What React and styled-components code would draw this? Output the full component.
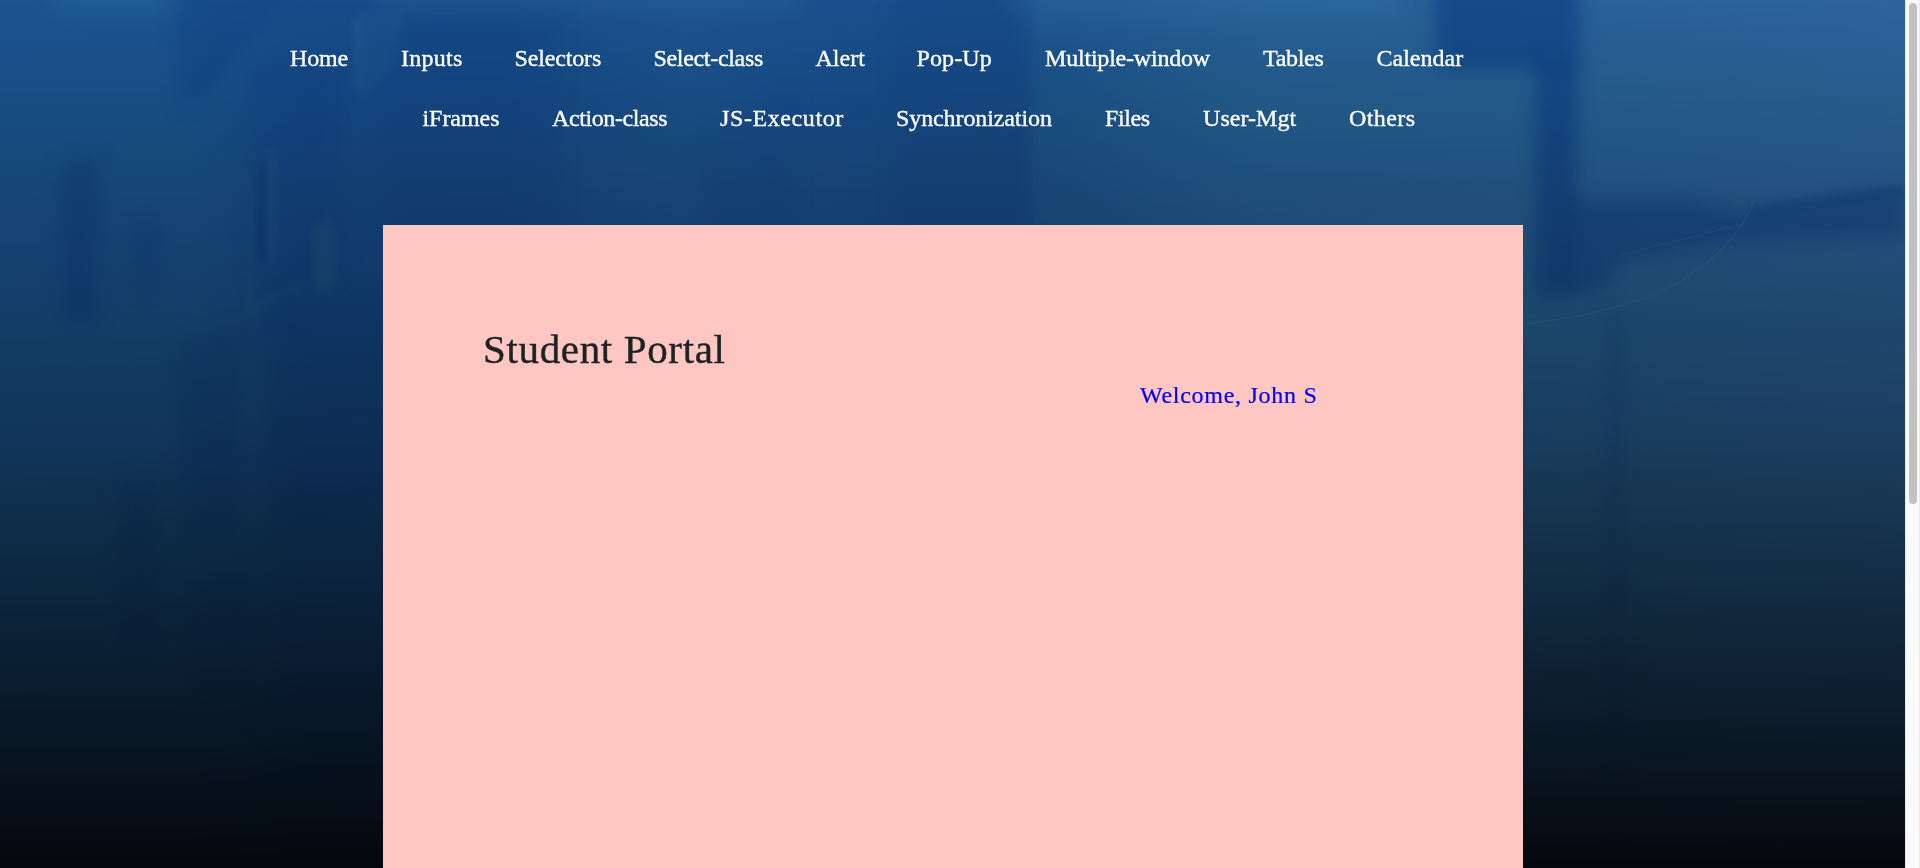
import React from "react";
import styled, { createGlobalStyle } from "styled-components";

const GlobalStyle = createGlobalStyle`
  * { box-sizing: border-box; }
  html, body { margin: 0; padding: 0; overflow: hidden; }
  body { font-family: "Liberation Serif", "Times New Roman", serif; background: #03070d; }
`;

const Screen = styled.div`
  display: flex;
  width: 100%;
  height: 868px;
  overflow: hidden;
`;

const Page = styled.div`
  position: relative;
  flex: 1;
  height: 868px;
  overflow: hidden;
`;

const Backdrop = styled.svg`
  position: absolute;
  inset: 0;
  width: 100%;
  height: 100%;
`;

const Content = styled.div`
  position: relative;
  display: flex;
  flex-direction: column;
  height: 100%;
`;

const Nav = styled.nav`
  display: flex;
  flex-direction: column;
  height: 225px;
  padding-top: 28px;
`;

const NavRow = styled.ul`
  display: flex;
  gap: 53px;
  height: 60px;
  margin: 0;
  padding: 0 0 0 ${(p) => p.$indent}px;
  list-style: none;
`;

const NavItem = styled.li`
  width: ${(p) => p.$width}px;
  flex: none;
`;

const NavLink = styled.a`
  color: #fff;
  font-size: 24px;
  line-height: 60px;
  letter-spacing: ${(p) => p.$tracking}px;
  white-space: nowrap;
  text-decoration: none;
  -webkit-text-stroke: 0.35px #fff;
`;

const Panel = styled.main`
  display: flex;
  flex-direction: column;
  width: 1140px;
  flex: 1;
  margin-left: 383px;
  padding: 100px 206px 0 100px;
  background: #ffc7c2;
`;

const Title = styled.h1`
  margin: 0;
  color: #1c2325;
  font-size: 41px;
  font-weight: 400;
  line-height: 48px;
  letter-spacing: 0.65px;
  -webkit-text-stroke: 0.4px #1c2325;
`;

const Welcome = styled.p`
  margin: 7px 0 0;
  align-self: flex-end;
  width: 177px;
  color: #00f;
  font-size: 24px;
  line-height: 30px;
  letter-spacing: 0.72px;
  white-space: nowrap;
  -webkit-text-stroke: 0.2px #00f;
`;

const ScrollTrack = styled.div`
  width: 15px;
  height: 100%;
  padding: 3px 2px 0 3px;
  border-left: 1px solid #e8e8e8;
  border-right: 1px solid #ececec;
  background: #fafafa;
`;

const ScrollThumb = styled.div`
  width: 8px;
  height: 501px;
  border-radius: 4px;
  background: #c1c1c1;
`;

const rows = [
  {
    indent: 290,
    items: [
      ["Home", 58, -0.2],
      ["Inputs", 60.5, 0.25],
      ["Selectors", 86, -0.15],
      ["Select-class", 109, -0.32],
      ["Alert", 48, 0],
      ["Pop-Up", 75.5, 0.1],
      ["Multiple-window", 165, -0.2],
      ["Tables", 60.5, -0.3],
      ["Calendar", 86, 0],
    ],
  },
  {
    indent: 422.5,
    items: [
      ["iFrames", 76.5, -0.05],
      ["Action-class", 115, -0.4],
      ["JS-Executor", 123, 0.6],
      ["Synchronization", 156, -0.1],
      ["Files", 45, -0.4],
      ["User-Mgt", 93, 0.05],
      ["Others", 66, 0.4],
    ],
  },
];

function NightStreet() {
  return (
    <Backdrop viewBox="0 0 1905 868" preserveAspectRatio="none" aria-hidden="true">
      <defs>
        <linearGradient id="base" x1="0" x2="1" y1="0" y2="0">
          <stop offset="0" stopColor="#1b5794" />
          <stop offset="0.1" stopColor="#1b5793" />
          <stop offset="0.16" stopColor="#174e8e" />
          <stop offset="0.26" stopColor="#174d8d" />
          <stop offset="0.36" stopColor="#1c5592" />
          <stop offset="0.45" stopColor="#195190" />
          <stop offset="0.539" stopColor="#19508d" />
          <stop offset="0.544" stopColor="#1d5791" />
          <stop offset="0.66" stopColor="#266298" />
          <stop offset="0.8" stopColor="#28649a" />
          <stop offset="1" stopColor="#2d669f" />
        </linearGradient>
        <linearGradient id="shade" x1="0" x2="0" y1="0" y2="1">
          <stop offset="0" stopColor="#050b0e" stopOpacity="0.02" />
          <stop offset="0.25" stopColor="#050b0e" stopOpacity="0.24" />
          <stop offset="0.5" stopColor="#050b0e" stopOpacity="0.43" />
          <stop offset="0.69" stopColor="#050b0e" stopOpacity="0.65" />
          <stop offset="0.86" stopColor="#050a0f" stopOpacity="0.85" />
          <stop offset="1" stopColor="#04060b" stopOpacity="0.98" />
        </linearGradient>
        <linearGradient id="glow" x1="0" x2="0" y1="0" y2="1">
          <stop offset="0" stopColor="#3a80ad" stopOpacity="0.26" />
          <stop offset="1" stopColor="#3a80ad" stopOpacity="0" />
        </linearGradient>
        <filter id="soft" x="-30%" y="-30%" width="160%" height="160%" colorInterpolationFilters="sRGB">
          <feGaussianBlur stdDeviation="9" />
        </filter>
        <filter id="edge" x="-30%" y="-30%" width="160%" height="160%" colorInterpolationFilters="sRGB">
          <feGaussianBlur stdDeviation="3.5" />
        </filter>
      </defs>
      <rect width="1905" height="868" fill="url(#base)" />
      <g fill="#0d4189" filter="url(#soft)">
        <path d="M172 -20H300L210 95L180 108Z" opacity="0.38" />
        <path d="M250 60H345V300L280 330L250 280Z" opacity="0.22" />
        <path d="M402 15L560 0V240H383V90Z" opacity="0.2" />
        <path d="M700 150L795 90V240H700ZM895 -20H1020V240H895Z" opacity="0.2" />
        <path d="M62 165L98 155V320L62 325Z" opacity="0.5" />
        <path d="M133 225H157V290H133Z" opacity="0.35" />
        <path d="M178 345L240 325V540L178 545ZM265 315L390 290V490L330 520H270Z" opacity="0.38" />
        <path d="M118 480L160 470V655H118ZM185 575L250 565V690H185Z" opacity="0.38" />
        <path d="M270 520H390V780H270Z" opacity="0.2" />
        <path d="M1435 -30H1580V70H1435Z" opacity="0.65" />
        <path d="M1535 60H1577V295H1535Z" opacity="0.65" />
        <path d="M1570 198H1690L1750 212L1905 190V236L1740 243L1620 262L1600 292H1570Z" opacity="0.5" />
        <path d="M1608 310H1622V868H1608Z" opacity="0.28" />
      </g>
      <g filter="url(#edge)">
        <path d="M255 170L267 160V260H255Z" fill="#0b3d84" opacity="0.45" />
        <path d="M250 170V314L275 296L310 285L345 300" fill="none" stroke="#2d718b" strokeWidth="7" opacity="0.16" />
        <path d="M272 150V260M358 20V90" fill="none" stroke="#3978a0" strokeWidth="8" opacity="0.2" />
        <rect x="314" y="221" width="21" height="67" rx="9" fill="#2d7190" opacity="0.28" />
        <path d="M360 102L392 70L405 12H355Z" fill="#296b9c" opacity="0.18" />
        <path d="M1750 206L1905 184V197L1750 219Z" fill="#0e438c" opacity="0.4" />
      </g>
      <path
        d="M1523 324Q1600 316 1660 292Q1718 263 1742 224Q1750 212 1753 203"
        fill="none"
        stroke="#4e8caa"
        strokeWidth="1.5"
        opacity="0.22"
      />
      <path d="M1620 255L1742 224" fill="none" stroke="#4e8caa" strokeWidth="1.5" opacity="0.15" />
      <g fill="url(#glow)" filter="url(#soft)">
        <path d="M50 -10H180V20H60Z" />
        <path d="M375 -10H800V22H390Z" />
        <path d="M1000 -10H1400V40H1030Z" />
      </g>
      <rect width="1905" height="868" fill="url(#shade)" />
    </Backdrop>
  );
}

export default function App() {
  return (
    <>
      <GlobalStyle />
      <Screen>
        <Page>
          <NightStreet />
          <Content>
            <Nav>
              {rows.map((row) => (
                <NavRow key={row.indent} $indent={row.indent}>
                  {row.items.map(([label, width, tracking]) => (
                    <NavItem key={label} $width={width}>
                      <NavLink $tracking={tracking}>{label}</NavLink>
                    </NavItem>
                  ))}
                </NavRow>
              ))}
            </Nav>
            <Panel>
              <Title>Student Portal</Title>
              <Welcome>Welcome, John S</Welcome>
            </Panel>
          </Content>
        </Page>
        <ScrollTrack>
          <ScrollThumb />
        </ScrollTrack>
      </Screen>
    </>
  );
}
